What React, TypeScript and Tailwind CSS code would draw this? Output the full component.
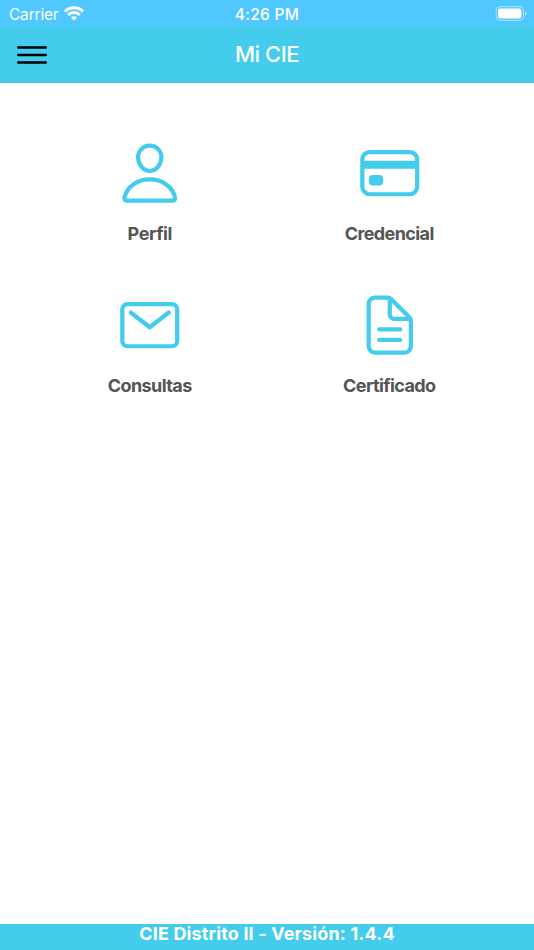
import type { ReactNode } from "react";

interface MenuItem {
  label: string;
  labelClass: string;
  icon: ReactNode;
}

const items: MenuItem[] = [
  {
    label: "Perfil",
    labelClass: "tracking-[-0.45px]",
    icon: (
      <>
        <path d="M344 144c-3.92 52.87-44 96-88 96s-84.15-43.12-88-96c-4-55 35-96 88-96s92 42 88 96z" />
        <path d="M256 304c-87 0-175.3 48-191.64 138.6C62.39 453.52 68.57 464 80 464h352c11.44 0 17.62-10.48 15.65-21.4C431.3 352 343 304 256 304z" />
      </>
    ),
  },
  {
    label: "Credencial",
    labelClass: "tracking-[-0.6px]",
    icon: (
      <>
        <rect x="48" y="96" width="416" height="320" rx="56" />
        <path d="M48 192h416M128 300h48v20h-48z" strokeWidth="60" strokeLinecap="butt" />
      </>
    ),
  },
  {
    label: "Consultas",
    labelClass: "tracking-[-0.6px]",
    icon: (
      <>
        <rect x="48" y="96" width="416" height="320" rx="40" />
        <path d="M112 160l144 112 144-112" />
      </>
    ),
  },
  {
    label: "Certificado",
    labelClass: "tracking-[-0.6px]",
    icon: (
      <>
        <path d="M416 221.25V416a48 48 0 01-48 48H144a48 48 0 01-48-48V96a48 48 0 0148-48h98.75a32 32 0 0122.62 9.37l141.26 141.26a32 32 0 019.37 22.62z" />
        <path d="M256 56v120a32 32 0 0032 32h120M176 288h160M176 368h160" />
      </>
    ),
  },
];

function StatusBar() {
  return (
    <div className="grid h-[26px] grid-cols-3 items-center bg-[#50c7ff] text-[15.5px] leading-[26px] text-white">
      <div className="flex h-[26px] items-center pl-[9px]">
        <span className="pt-[2px] tracking-[-0.2px]">Carrier</span>
        <svg className="mb-[2px] ml-[6px] h-[15px] w-[20px]" viewBox="0 0 20 15" fill="none" stroke="currentColor" strokeWidth="3">
          <path d="M1 5.5a12.8 12.8 0 0118 0" />
          <path d="M4.2 9a8.2 8.2 0 0111.6 0" />
          <path d="M10 14.6l-3-3.1a4.2 4.2 0 016 0z" fill="currentColor" stroke="none" />
        </svg>
      </div>
      <div className="pt-[2px] text-center font-medium tracking-[0.3px]">4:26 PM</div>
      <div className="flex justify-end pr-[7px] pb-px">
        <svg className="h-[15px] w-[32px]" viewBox="0 0 32 15">
          <rect x="1.2" y="0.7" width="27.2" height="13.6" rx="3.8" fill="none" stroke="white" strokeOpacity="0.45" strokeWidth="1.2" />
          <rect x="3" y="2.5" width="23.4" height="10" rx="2" fill="white" />
          <path d="M30 5v4.8c1-.4 1.8-1.3 1.8-2.4S31 5.4 30 5z" fill="white" fillOpacity="0.5" />
        </svg>
      </div>
    </div>
  );
}

function Header() {
  return (
    <header className="grid h-[57px] grid-cols-3 items-center bg-[#43cceb]">
      <button className="ml-[17px] w-[30px]" aria-label="Menu">
        <svg className="h-[19px] w-[30px]" viewBox="0 0 30 19" stroke="black" strokeWidth="2.6" strokeLinecap="round">
          <path d="M1.3 2.5h27.4M1.3 10h27.4M1.3 17.5h27.4" />
        </svg>
      </button>
      <h1 className="text-center text-[22px] font-medium tracking-[-0.45px] text-white">Mi CIE</h1>
    </header>
  );
}

export default function App() {
  return (
    <div className="flex h-screen flex-col bg-white font-['Inter',sans-serif]">
      <StatusBar />
      <Header />
      <main className="grid flex-1 grid-cols-[239.5px_239.5px] content-start pt-[56.4px] pl-[30px]">
        {items.map((item) => (
          <button key={item.label} className="flex h-[152px] flex-col items-center">
            <svg
              className="h-[67.5px] w-[67.5px]"
              viewBox="0 -3 512 512"
              fill="none"
              stroke="#43cceb"
              strokeWidth="32"
              strokeLinecap="round"
              strokeLinejoin="round"
            >
              {item.icon}
            </svg>
            <span className={`mt-[15px] text-[18px] leading-6 font-bold text-[#555555] ${item.labelClass}`}>
              {item.label}
            </span>
          </button>
        ))}
      </main>
      <footer className="h-[26px] bg-[#43cceb] text-center text-[18px] leading-[19px] font-bold tracking-[0.15px] text-white">
        CIE Distrito II - Versión: 1.4.4
      </footer>
    </div>
  );
}
